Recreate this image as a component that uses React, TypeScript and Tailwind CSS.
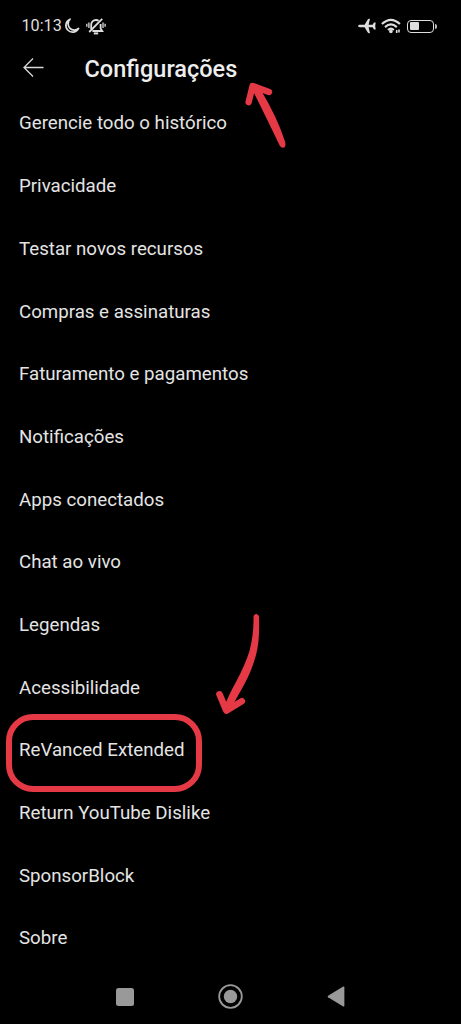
import clsx from "clsx";

const items = [
  "Gerencie todo o histórico",
  "Privacidade",
  "Testar novos recursos",
  "Compras e assinaturas",
  "Faturamento e pagamentos",
  "Notificações",
  "Apps conectados",
  "Chat ao vivo",
  "Legendas",
  "Acessibilidade",
  "ReVanced Extended",
  "Return YouTube Dislike",
  "SponsorBlock",
  "Sobre",
];

const HIGHLIGHTED = "ReVanced Extended";

function StatusBar() {
  return (
    <div className="flex h-[50px] items-center pl-[21.5px] pr-[24.5px] pt-[2px] text-[#dedede]">
      <span className="w-[41px] whitespace-nowrap pt-px text-[16.2px] leading-none">10:13</span>

      <svg className="ml-[1.5px] h-4 w-4" viewBox="0 0 16 16" fill="none" stroke="currentColor" strokeWidth="1.7" strokeLinejoin="round">
        <path d="M6.1 1.2A6.7 6.7 0 1 0 14.6 10.4A6.2 6.2 0 0 1 6.1 1.2Z" />
      </svg>

      <svg className="ml-[5.5px] h-[17px] w-[20px]" viewBox="0 0 20 17" fill="none" stroke="currentColor" strokeWidth="1.8">
        <path d="M5.2 11V6.6C5.2 4 7.2 2 10 2Q11.6 2 12.6 2.8M14.6 6V10.4L16.3 13H6.4" />
        <path d="M16.2 .8 3.2 14" />
        <path d="M7.8 15.4H12.2" strokeWidth="2" />
        <path d="M2.9 4.5V10M.8 5.8V8.8M17 4.5V10M19.1 5.8V8.8" strokeWidth="1.3" />
      </svg>

      <svg className="ml-auto h-[18px] w-[18px]" viewBox="0 0 18 18" fill="currentColor">
        <path d="M.2 9C.2 8.2 1 7.8 1.8 7.8H6.6L9.6 2.7Q10.4 1.3 12 1.8L10.6 7.8H14.6L16 5.6H17.7L17.2 9L17.7 12.4H16L14.6 10.2H10.6L12 16.2Q10.4 16.7 9.6 15.3L6.6 10.2H1.8C1 10.2 .2 9.8 .2 9Z" />
      </svg>

      <svg className="ml-[5.5px] h-[16px] w-[21px]" viewBox="0 0 21 16" fill="none" stroke="currentColor" strokeWidth="2.2">
        <path d="M.9 6Q9.9-2.4 18.9 6" />
        <path d="M4 9.1Q9.9 3.8 15.8 9.1" />
        <path d="M7 12Q9.9 9.4 12.8 12" />
        <circle cx="9.9" cy="13.4" r="1.8" fill="currentColor" stroke="none" />
        <path d="M15.7 12V15M18 11.5V14.5" strokeWidth="1.6" />
      </svg>

      <div className="ml-[5px] flex items-center gap-px">
        <div className="h-[13px] w-[27px] rounded-[4px] border-[1.4px] border-[#dedede] p-[1.5px]">
          <div className="h-full w-[9px] rounded-[1px] bg-[#dedede]" />
        </div>
        <div className="h-[5px] w-[1.5px] rounded-r bg-[#bcbcbc]" />
      </div>
    </div>
  );
}

function Header() {
  return (
    <div className="relative flex h-[41.9px] items-center pb-[3px]">
      <svg className="-mt-[5px] ml-[23px] h-5 w-[21px]" viewBox="0 0 21 20" fill="none" stroke="#d8d8d8" strokeWidth="1.3">
        <path d="M20.5 10.5H1M10 1.5 1 10.5 10 19.5" />
      </svg>
      <h1 className="ml-[40.5px] whitespace-nowrap text-[23.5px] font-medium leading-none text-[#eeeeee]">
        Configurações
      </h1>

      {/* hand-drawn arrow pointing at the title */}
      <svg className="absolute left-[240px] top-[26px] h-[80px] w-[60px]" viewBox="240 76 60 80" fill="#e63946" stroke="#e63946">
        <path d="M250.5 86 255.5 96Q266 117 279.8 145.8Q282 149 284.8 147Q286 145 285 141.5Q277 117 262 92L255 84Z" stroke="none" />
        <path d="M248.6 102.2 252.6 86 269 92" fill="none" strokeWidth="6.4" strokeLinecap="round" strokeLinejoin="round" />
      </svg>
    </div>
  );
}

function NavigationBar() {
  return (
    <div className="flex flex-1 items-center justify-center text-[#999999]">
      <div className="h-[18px] w-[18px] rounded-[2.5px] bg-[#999999]" />
      <svg className="ml-[84px] h-[25px] w-[25px]" viewBox="0 0 25 25">
        <circle cx="12.5" cy="12.5" r="11.3" fill="none" stroke="currentColor" strokeWidth="1.8" />
        <circle cx="12.5" cy="12.5" r="6.7" fill="currentColor" />
      </svg>
      <svg className="ml-[83.5px] h-[21px] w-[18px]" viewBox="0 0 18 21" fill="currentColor">
        <path d="M16.2.6Q17.4 0 17.4 1.4V19.6Q17.4 21 16.2 20.4L1.1 11.3Q0 10.5 1.1 9.7Z" />
      </svg>
    </div>
  );
}

export default function App() {
  return (
    <div className="relative flex h-[1024px] w-full flex-col overflow-hidden bg-black font-['Roboto',sans-serif]">
      <StatusBar />
      <Header />

      <ul>
        {items.map((item) => (
          <li
            key={item}
            className={clsx(
              "flex h-[62.7px] items-center pl-[19px] pt-[1.2px] text-[18.7px] leading-none text-[#e4e4e4]",
              item === HIGHLIGHTED && "relative"
            )}
          >
            <span className="whitespace-nowrap">{item}</span>
            {item === HIGHLIGHTED && (
              <>
                <span className="absolute left-[6px] top-[-4.5px] h-[78px] w-[196px] rounded-[27px] border-6 border-[#e63946]" />
                <svg className="absolute left-[210px] top-[-108.9px] h-[110px] w-[60px]" viewBox="210 610 60 110" fill="#e63946" stroke="#e63946">
                  <path d="M253.5 616Q256.2 612 259 616Q260 640 256 655Q252 670 244.5 684Q236 699 229 712L223.5 709Q228 696 236.5 681Q245 665 249.5 651Q254 634 253.5 616Z" stroke="none" />
                  <path d="M219.5 694.3 226.3 710.6 241.8 701.2" fill="none" strokeWidth="6.6" strokeLinecap="round" strokeLinejoin="round" />
                </svg>
              </>
            )}
          </li>
        ))}
      </ul>

      <NavigationBar />
    </div>
  );
}
